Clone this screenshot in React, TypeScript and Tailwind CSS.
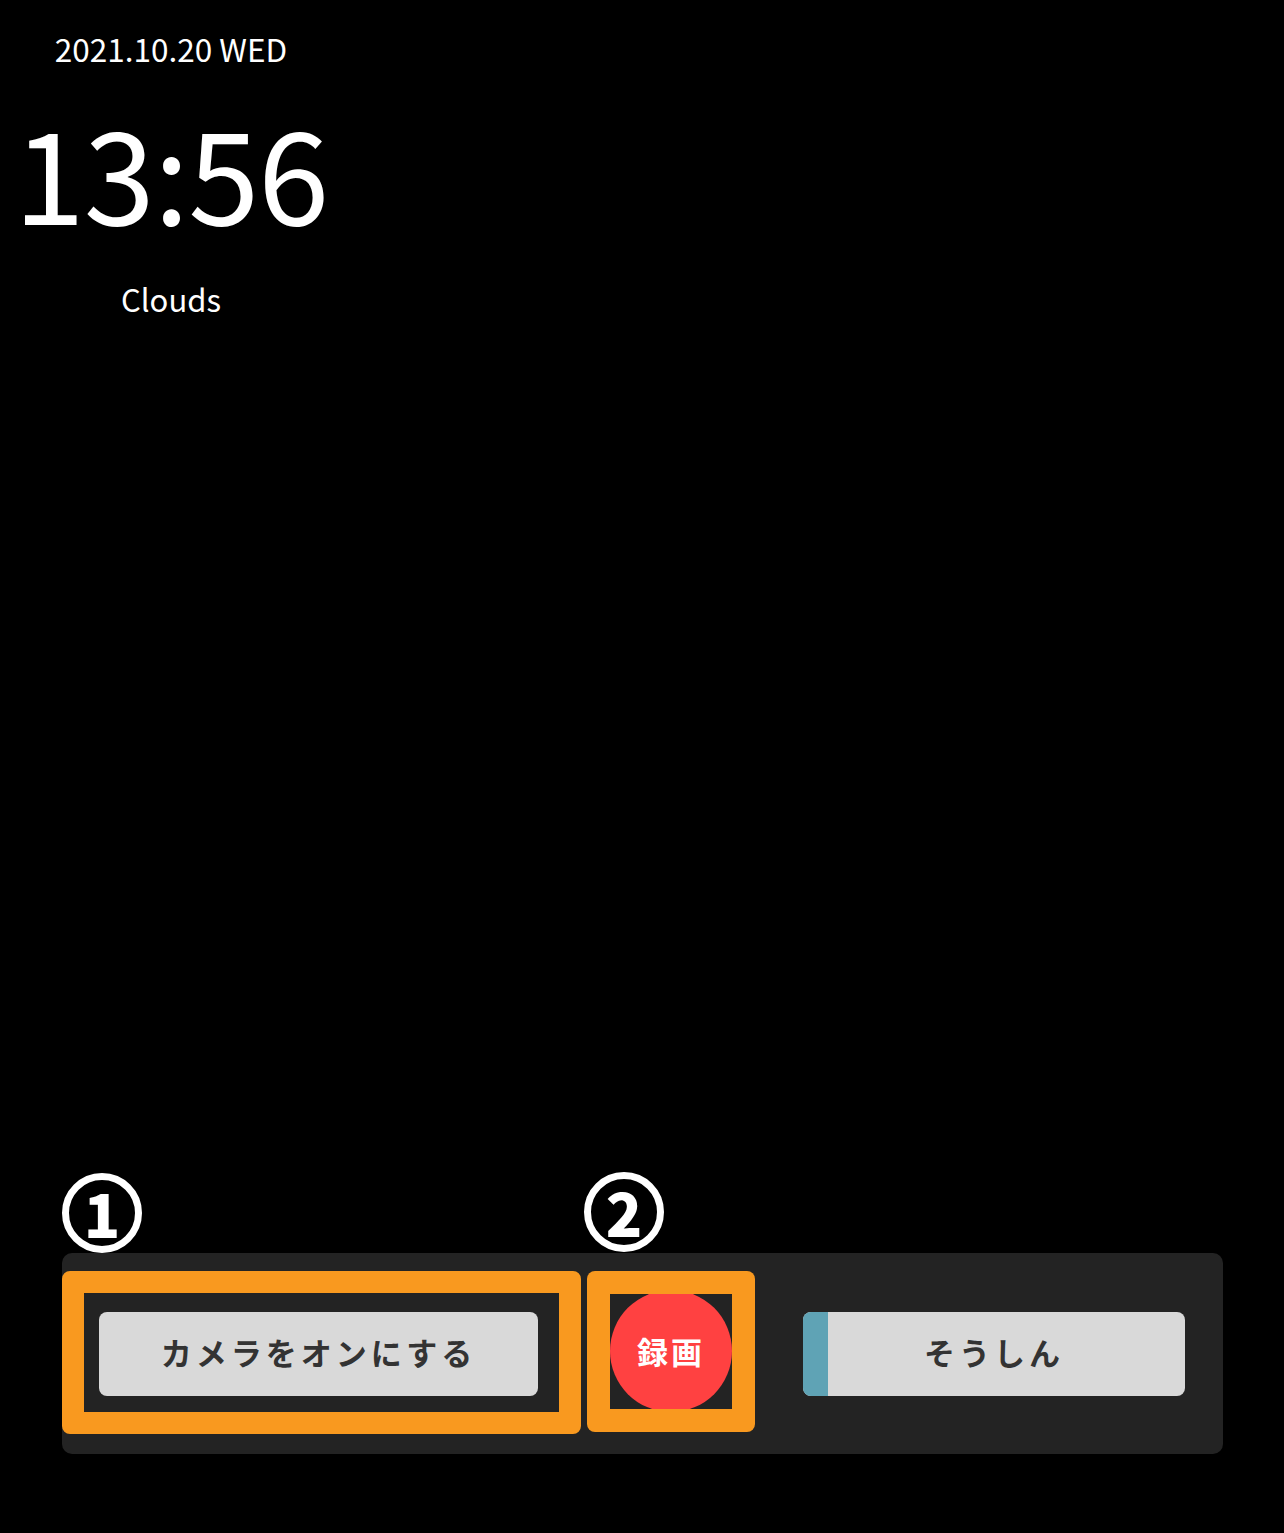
import React from "react";

const jp = { fontFamily: '"Noto Sans CJK JP", "Noto Sans", sans-serif' };

function Marker({ n }: { n: string }) {
  return (
    <div
      className="flex h-[80px] w-[80px] items-center justify-center rounded-full border-[7px] border-white bg-black text-[60px] font-black leading-none text-white"
      style={jp}
    >
      <span className="-mt-[3px]">{n}</span>
    </div>
  );
}

export default function App() {
  return (
    <div className="relative h-[1533px] w-[1284px] overflow-hidden bg-black text-white" style={jp}>
      <div className="flex w-[342px] flex-col items-center pt-[26px]">
        <div className="text-[31.5px] leading-[44px]">2021.10.20 WED</div>
        <div className="mt-[20px] text-[128px] leading-[160px] tracking-[-1px]">13:56</div>
        <div className="mt-[27px] text-[31px] leading-[44px]">Clouds</div>
      </div>

      <div className="relative mt-[932px] ml-[62px] h-[201px] w-[1161px] rounded-[10px] bg-[#232323]">
        <div className="flex items-start pt-[18px]">
          <div className="flex h-[163px] w-[519px] items-start rounded-[8px] border-[22px] border-[#f9991f] pl-[15px] pt-[19px]">
            <div className="flex h-[84px] w-[439px] items-center justify-center rounded-[8px] bg-[#d9d9d9] pb-[3px] text-[31px] font-bold tracking-[4px] text-[#333333]">
              カメラをオンにする
            </div>
          </div>
          <div className="ml-[6px] h-[161px] w-[168px] rounded-[8px] bg-[#f9991f] p-[23px]">
            <div className="h-[115px] w-[122px] overflow-hidden bg-[#232323]">
              <div className="-mt-[4px] flex h-[122px] w-[122px] items-center justify-center rounded-full bg-[#ff4141] text-[31px] font-bold tracking-[3px] text-white">
                録画
              </div>
            </div>
          </div>
          <div className="ml-[48px] mt-[41px] flex h-[84px] w-[382px] overflow-hidden rounded-[8px] bg-[#d9d9d9]">
            <div className="h-full w-[25px] bg-[#5fa3b5]" />
            <div className="flex flex-1 items-center justify-center pb-[3px] pr-[25px] text-[31px] font-bold tracking-[4px] text-[#333333]">
              そうしん
            </div>
          </div>
        </div>
        <div className="absolute left-0 top-[-80px]">
          <Marker n="1" />
        </div>
        <div className="absolute left-[522px] top-[-81px]">
          <Marker n="2" />
        </div>
      </div>
    </div>
  );
}
